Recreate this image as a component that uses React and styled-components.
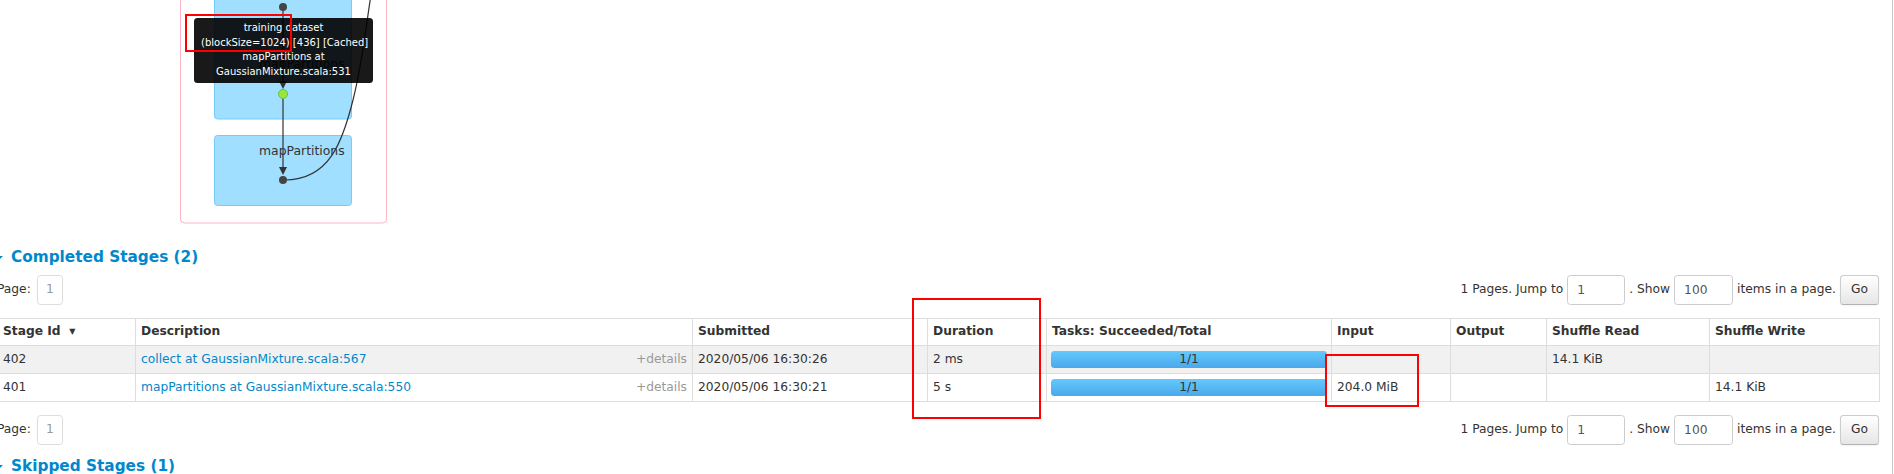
import React from 'react';
import styled, { createGlobalStyle } from 'styled-components';

const GlobalStyle = createGlobalStyle`
  html, body {
    margin: 0;
    padding: 0;
    background: #fff;
  }
  body {
    font-family: "DejaVu Sans", "Liberation Sans", sans-serif;
    font-size: 12.25px;
    line-height: 17.5px;
    color: #333;
    overflow: hidden;
  }
`

const Page = styled.div`
  position: relative;
  width: 1893px;
  height: 474px;
  box-sizing: border-box;
  border-right: 1px solid #c9c9c9;
  overflow: hidden;
`

// ---- DAG visualisation ----
const GraphArea = styled.div`
  position: relative;
  height: 230px;
`

const DagSvg = styled.svg`
  display: block;
`

const Tooltip = styled.div`
  position: absolute;
  left: 194px;
  top: 18px;
  width: 179px;
  box-sizing: border-box;
  padding: 3px 7px;
  background: rgba(0, 0, 0, 0.9);
  border-radius: 3.5px;
  color: #fff;
  font-size: 10px;
  line-height: 14.7px;
  text-align: center;
  white-space: nowrap;
`

// ---- stages section ----
const Content = styled.div`
  margin-left: -3px;
  width: 1882px;
`

const SectionTitle = styled.h4`
  display: flex;
  align-items: center;
  margin: ${props => props.$top}px 0 0;
  height: 19px;
  line-height: 19px;
  font-size: 15.3px;
  font-weight: bold;
  color: #0088cc;
`

const OpenArrow = styled.span`
  width: 0;
  height: 0;
  margin-left: -2px;
  margin-right: 8px;
  border-left: 4.4px solid transparent;
  border-right: 4.4px solid transparent;
  border-top: 4.4px solid #0088cc;
`

const Pager = styled.div`
  display: flex;
  align-items: center;
  justify-content: space-between;
  height: 30px;
  margin-top: ${props => props.$top}px;
`

const PageLabel = styled.div`
  display: flex;
  align-items: center;
  gap: 6px;
`

const PageBox = styled.span`
  display: inline-flex;
  align-items: center;
  justify-content: center;
  width: 26px;
  height: 30px;
  box-sizing: border-box;
  border: 1px solid #ddd;
  border-radius: 3.5px;
  color: #999;
`

const PagerForm = styled.div`
  display: flex;
  align-items: center;
  gap: 4px;
`

const PagerInput = styled.input`
  width: ${props => props.$w}px;
  height: 30px;
  box-sizing: border-box;
  margin: 0;
  padding: 0 9px;
  border: 1px solid #ccc;
  border-radius: 3.5px;
  font: inherit;
  color: #555;
  background: #fff;
`

const GoButton = styled.button`
  width: 39px;
  height: 30px;
  margin: 0;
  padding: 0;
  border: 1px solid #ccc;
  border-bottom-color: #b3b3b3;
  border-radius: 3.5px;
  background: linear-gradient(#ffffff, #e6e6e6);
  box-shadow: inset 0 1px 0 rgba(255, 255, 255, 0.2), 0 1px 2px rgba(0, 0, 0, 0.05);
  font: inherit;
  color: #333;
`

const StageTable = styled.table`
  width: 1882px;
  margin-top: 13px;
  table-layout: fixed;
  border-collapse: collapse;
`

const HeadCell = styled.th`
  height: 26px;
  padding: 0 5px;
  border: 1px solid #ddd;
  text-align: left;
  vertical-align: middle;
  font-weight: bold;
  white-space: nowrap;
  overflow: hidden;
`

const Row = styled.tr`
  background: ${props => (props.$striped ? '#f1f1f1' : '#fff')};
`

const Cell = styled.td`
  height: 27px;
  padding: 0 ${props => (props.$tight ? 4 : 5)}px;
  border: 1px solid #ddd;
  vertical-align: middle;
  white-space: nowrap;
  overflow: hidden;
`

const DescLink = styled.a`
  color: #0088cc;
  text-decoration: none;
`

const Details = styled.span`
  float: right;
  color: #999;
`

const ProgressBar = styled.div`
  height: 17px;
  border-radius: 3.5px;
  background: linear-gradient(#64c9fd, #49a8eb);
  color: #333;
  line-height: 17px;
  text-align: center;
`

const Mark = styled.div`
  position: absolute;
  left: ${props => props.$x}px;
  top: ${props => props.$y}px;
  width: ${props => props.$w}px;
  height: ${props => props.$h}px;
  box-sizing: border-box;
  border: 2px solid #f00;
  pointer-events: none;
`

const columns = [
  { title: 'Stage Id', width: 138, sort: true },
  { title: 'Description', width: 557 },
  { title: 'Submitted', width: 235 },
  { title: 'Duration', width: 119 },
  { title: 'Tasks: Succeeded/Total', width: 285 },
  { title: 'Input', width: 119 },
  { title: 'Output', width: 96 },
  { title: 'Shuffle Read', width: 163 },
  { title: 'Shuffle Write', width: 170 },
]

const stages = [
  {
    id: 402,
    desc: 'collect at GaussianMixture.scala:567',
    submitted: '2020/05/06 16:30:26',
    duration: '2 ms',
    tasks: '1/1',
    input: '',
    output: '',
    shuffleRead: '14.1 KiB',
    shuffleWrite: '',
  },
  {
    id: 401,
    desc: 'mapPartitions at GaussianMixture.scala:550',
    submitted: '2020/05/06 16:30:21',
    duration: '5 s',
    tasks: '1/1',
    input: '204.0 MiB',
    output: '',
    shuffleRead: '',
    shuffleWrite: '14.1 KiB',
  },
]

function DagGraph() {
  return (
    <GraphArea>
      <DagSvg width="400" height="230" viewBox="0 0 400 230">
        <rect x="180.5" y="-10" width="206" height="233" rx="4" fill="#fff" stroke="#ffb4c4" />
        <rect x="214.5" y="-10" width="137" height="129" rx="3" fill="#a0dfff" stroke="#76ccf8" />
        <text x="259" y="68" fontSize="12.4" fill="#333" fontFamily="DejaVu Sans, sans-serif">mapPartitions</text>
        <rect x="214.5" y="135.5" width="137" height="70" rx="3" fill="#a0dfff" stroke="#76ccf8" />
        <text x="259" y="155" fontSize="12.4" fill="#333" fontFamily="DejaVu Sans, sans-serif">mapPartitions</text>
        <path d="M283 7 V84" stroke="#333" strokeWidth="1.2" fill="none" />
        <polygon points="279,81 287,81 283,89" fill="#333" />
        <path d="M283 94 V170" stroke="#333" strokeWidth="1.2" fill="none" />
        <polygon points="279,167 287,167 283,175" fill="#333" />
        <path d="M283 180 C330 181, 343 140, 353 100 S366 25, 371 -5" stroke="#333" strokeWidth="1.2" fill="none" />
        <circle cx="283" cy="7" r="4" fill="#444" />
        <circle cx="283" cy="94" r="4.5" fill="#99e63c" stroke="#68c13c" />
        <circle cx="283" cy="180" r="4" fill="#444" />
      </DagSvg>
      <Tooltip>
        training dataset<br />
        (blockSize=1024) [436] [Cached]<br />
        mapPartitions at<br />
        GaussianMixture.scala:531
      </Tooltip>
    </GraphArea>
  )
}

function Pagination({ top }) {
  return (
    <Pager $top={top}>
      <PageLabel>
        Page:
        <PageBox>1</PageBox>
      </PageLabel>
      <PagerForm>
        1 Pages. Jump to
        <PagerInput $w={58} defaultValue="1" readOnly />
        . Show
        <PagerInput $w={59} defaultValue="100" readOnly />
        items in a page.
        <GoButton>Go</GoButton>
      </PagerForm>
    </Pager>
  )
}

export default function App() {
  return (
    <Page>
      <GlobalStyle />
      <DagGraph />
      <Content>
        <SectionTitle $top={18}>
          <OpenArrow />
          Completed Stages (2)
        </SectionTitle>
        <Pagination top={8} />
        <StageTable>
          <colgroup>
            {columns.map(c => (
              <col key={c.title} width={c.width} />
            ))}
          </colgroup>
          <thead>
            <tr>
              {columns.map(c => (
                <HeadCell key={c.title}>
                  {c.title}
                  {c.sort && '\u00a0 \u25BE'}
                </HeadCell>
              ))}
            </tr>
          </thead>
          <tbody>
            {stages.map((s, i) => (
              <Row key={s.id} $striped={i % 2 === 0}>
                <Cell>{s.id}</Cell>
                <Cell>
                  <DescLink href="#">{s.desc}</DescLink>
                  <Details>+details</Details>
                </Cell>
                <Cell>{s.submitted}</Cell>
                <Cell>{s.duration}</Cell>
                <Cell $tight>
                  <ProgressBar>{s.tasks}</ProgressBar>
                </Cell>
                <Cell>{s.input}</Cell>
                <Cell>{s.output}</Cell>
                <Cell>{s.shuffleRead}</Cell>
                <Cell>{s.shuffleWrite}</Cell>
              </Row>
            ))}
          </tbody>
        </StageTable>
        <Pagination top={13} />
        <SectionTitle $top={12}>
          <OpenArrow />
          Skipped Stages (1)
        </SectionTitle>
      </Content>
      <Mark $x={185} $y={14} $w={107} $h={38} />
      <Mark $x={912} $y={298} $w={129} $h={121} />
      <Mark $x={1325} $y={354} $w={94} $h={53} />
    </Page>
  )
}
